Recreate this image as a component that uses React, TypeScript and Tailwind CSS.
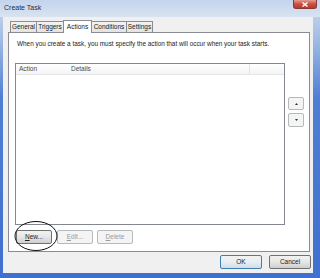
import React from "react";

const TABS = [
  { label: "General", w: "w-[27px]" },
  { label: "Triggers", w: "w-[28px]" },
  { label: "Actions", w: "w-[29px]", active: true },
  { label: "Conditions", w: "w-[36px]" },
  { label: "Settings", w: "w-[27px]" },
];

function Btn({
  children,
  disabled,
  primary,
  className = "",
}: {
  children?: React.ReactNode;
  disabled?: boolean;
  primary?: boolean;
  className?: string;
}) {
  const tone = disabled
    ? "border-[#b5b9bc] bg-[#f4f4f4] text-[#9a9a9a]"
    : primary
    ? "border-[#3c7fb1] bg-gradient-to-b from-[#f2f2f2] via-[#e8eef3] to-[#d4dce4] text-[#222]"
    : "border-[#707070] bg-gradient-to-b from-[#f2f2f2] via-[#e6e6e6] to-[#cfcfcf] text-[#222]";
  return (
    <div
      className={`flex items-center justify-center rounded-[2px] border text-[6.5px] leading-none ${tone} ${className}`}
    >
      {children}
    </div>
  );
}

function Arrow({ up }: { up?: boolean }) {
  return (
    <svg width="3" height="2" viewBox="0 0 3 2">
      <path d={up ? "M0 2 L1.5 0 L3 2 Z" : "M0 0 L3 0 L1.5 2 Z"} fill="#333" />
    </svg>
  );
}

export default function App() {
  return (
    <div
      className="relative flex h-[278px] w-[320px] flex-col bg-[#4676d0] font-['Liberation_Sans',Arial,sans-serif] text-[#222]"
      style={{ backgroundImage: "linear-gradient(to bottom, #cddcef 0%, #a9c1e6 12%, #4f7fd4 35%, #3f70cf 100%)" }}
    >
      {/* title bar */}
      <div className="flex h-[17px] items-start justify-between bg-gradient-to-b from-[#c3d4ec] to-[#d8e3f1]">
        <div className="pl-[4px] pt-[4px] text-[7px] leading-[8px] text-[#1e2d45]">Create Task</div>
        <div className="mr-[3px] flex h-[9px] w-[24px] items-center justify-center rounded-b-[3px] border border-t-0 border-[#8a3a34] bg-gradient-to-b from-[#e29a8f] via-[#c94f42] to-[#b83a2c]">
          <svg width="6" height="5" viewBox="0 0 6 5">
            <path d="M0.5 0.5 L5.5 4.5 M5.5 0.5 L0.5 4.5" stroke="#fff" strokeWidth="1.4" />
          </svg>
        </div>
      </div>

      {/* client area */}
      <div className="mb-[5px] ml-[3px] mr-[7px] flex flex-1 flex-col bg-[#f0f0f0] pt-[3px]">
        <div className="relative z-10 -mb-[1px] ml-[7px] flex h-[13px] items-end">
          {TABS.map((t) =>
            t.active ? (
              <div
                key={t.label}
                className={`-ml-[1px] flex h-[13px] items-center justify-center border border-b-0 border-[#898c95] bg-white text-[6.5px] leading-none ${t.w}`}
              >
                {t.label}
              </div>
            ) : (
              <div
                key={t.label}
                className={`-ml-[1px] mb-[1px] flex h-[11px] items-center justify-center border border-b-0 border-[#898c95] bg-gradient-to-b from-[#f3f3f3] to-[#e3e3e3] text-[6.5px] leading-none first:ml-0 ${t.w}`}
              >
                {t.label}
              </div>
            )
          )}
        </div>

        <div className="ml-[5px] mr-[3px] flex flex-col border border-[#898c95] bg-white pb-[7px] pl-[6px] pt-[7px]">
          <div className="ml-[2px] h-[8px] whitespace-nowrap text-[6.4px] leading-[8px]">
            When you create a task, you must specify the action that will occur when your task starts.
          </div>

          <div className="mt-[15px] flex">
            <div className="flex h-[162px] w-[270px] flex-col border border-[#828790] bg-white">
              <div className="flex h-[11px] items-center border-b border-[#e5e5e5] bg-gradient-to-b from-[#ffffff] to-[#f3f4f6] text-[6.5px] leading-none text-[#4a4a4a]">
                <div className="w-[55px] pl-[3px]">Action</div>
                <div className="flex w-[179px] items-center self-stretch border-r border-[#e2e3e5]">Details</div>
              </div>
            </div>
            <div className="ml-[3px] mt-[34px] flex flex-col gap-[3px]">
              <Btn disabled className="h-[13px] w-[16px]">
                <Arrow up />
              </Btn>
              <Btn disabled className="h-[14px] w-[16px]">
                <Arrow />
              </Btn>
            </div>
          </div>

          <div className="ml-[1px] mt-[5px] flex">
            <Btn className="h-[14px] w-[36px]">
              <span>
                <span className="underline">N</span>ew...
              </span>
            </Btn>
            <Btn disabled className="ml-[5px] h-[14px] w-[36px]">
              <span>
                <span className="underline">E</span>dit...
              </span>
            </Btn>
            <Btn disabled className="ml-[4px] h-[14px] w-[36px]">
              <span>
                <span className="underline">D</span>elete
              </span>
            </Btn>
          </div>
        </div>

        <div className="mt-[3px] flex justify-end gap-[7px] pr-[2px]">
          <Btn primary className="h-[14px] w-[42px]">
            OK
          </Btn>
          <Btn className="h-[14px] w-[42px]">Cancel</Btn>
        </div>
      </div>

      {/* hand-drawn annotation */}
      <svg className="absolute left-0 top-0" width="320" height="278" viewBox="0 0 320 278">
        <ellipse cx="36" cy="236" rx="21" ry="14.5" fill="none" stroke="#111" strokeWidth="1" />
      </svg>
    </div>
  );
}
